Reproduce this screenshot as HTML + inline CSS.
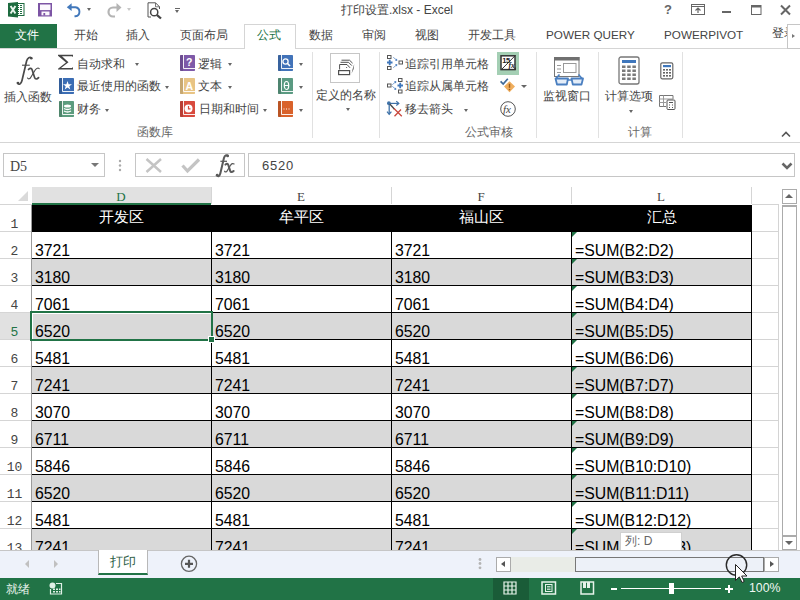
<!DOCTYPE html>
<html><head><meta charset="utf-8">
<style>
*{box-sizing:border-box;margin:0;padding:0}
html,body{width:800px;height:600px;overflow:hidden;background:#fff;font-family:"Liberation Sans",sans-serif;color:#444}
.a{position:absolute;white-space:nowrap}
svg.a{overflow:visible}
.tab{position:absolute;top:27px;font-size:12px;line-height:16px;color:#444;white-space:nowrap}
.rb{position:absolute;font-size:12px;line-height:14px;color:#444;white-space:nowrap}
.gl{position:absolute;top:125px;font-size:12px;line-height:14px;color:#666;white-space:nowrap}
.dd{position:absolute;width:0;height:0;border-left:2.5px solid transparent;border-right:2.5px solid transparent;border-top:3px solid #666}
.sep{position:absolute;top:52px;width:1px;height:86px;background:#e1e1e1}
.cell{position:absolute;font-size:15.8px;line-height:16px;color:#000;white-space:nowrap}
.hd{position:absolute;top:208px;width:179px;text-align:center;font-size:14.5px;line-height:18px;color:#fff}
.rh{position:absolute;left:0;width:31px;height:26px;padding-top:13px;padding-right:2px;text-align:center;font-family:"Liberation Mono",monospace;font-size:13px;line-height:13px;color:#555;letter-spacing:0px}
.ch{position:absolute;top:190px;width:40px;text-align:center;font-family:"Liberation Serif",serif;font-size:13px;line-height:14px;color:#444}
</style></head><body>

<!-- ===== title bar ===== -->
<svg class="a" style="left:8px;top:2px" width="17" height="16">
 <rect x="9.5" y="1.5" width="6.5" height="12" fill="#fff" stroke="#1d6b3f" stroke-width="1"/>
 <path d="M10 3.5h1M10 5.5h1M10 7.5h1M10 9.5h1M10 11.5h1 M12 3.5h2M12 5.5h2M12 7.5h2M12 9.5h2M12 11.5h2" stroke="#1d6b3f" stroke-width="1"/>
 <path d="M0 1 L10 0 L10 15.5 L0 14.5 Z" fill="#1d6b3f"/>
 <path d="M2.6 4 L7.4 11.5 M7.4 4 L2.6 11.5" stroke="#eaf6ee" stroke-width="1.9"/>
</svg>
<svg class="a" style="left:38px;top:3px" width="14" height="14">
 <path d="M0 0 H14 V13.5 H0 Z" fill="#7c54a4"/>
 <rect x="2" y="1.5" width="10.5" height="5.6" fill="#fbf8fd"/>
 <rect x="3.5" y="8.5" width="8" height="3.8" fill="#fbf8fd"/>
 <rect x="5.4" y="10" width="1.8" height="2.5" fill="#7c54a4"/>
</svg>
<svg class="a" style="left:66px;top:2px" width="16" height="15">
 <path d="M3.5 5.2 H9.5 A4.6 4.6 0 0 1 9.5 14.3 H8.5" fill="none" stroke="#4278bb" stroke-width="1.9"/>
 <path d="M0.8 5.2 L5.6 1.3 L5.6 9.1 Z" fill="#4278bb"/>
</svg>
<div class="dd" style="left:87px;top:8px;border-top-color:#666"></div>
<svg class="a" style="left:106px;top:2px" width="16" height="15">
 <path d="M12 5.5 H7 A4.5 4.5 0 0 0 7 14.5 H9" fill="none" stroke="#b4b4b4" stroke-width="2.2"/>
 <path d="M15.5 5.5 L10.5 1 L10.5 10 Z" fill="#b4b4b4"/>
</svg>
<div class="dd" style="left:127px;top:8px;border-top-color:#c8c8c8"></div>
<svg class="a" style="left:147px;top:2px" width="17" height="17">
 <path d="M1 15 V0.8 H8.5 L12.5 4.8 V7" fill="none" stroke="#555" stroke-width="1"/>
 <path d="M8.5 0.8 V4.8 H12.5" fill="none" stroke="#555" stroke-width="0.8"/>
 <path d="M1 15 H4" stroke="#555" stroke-width="1"/>
 <circle cx="7.2" cy="10.2" r="3.6" fill="#fff" stroke="#444" stroke-width="1.5"/>
 <path d="M9.8 12.8 L14 16.5" stroke="#444" stroke-width="2.2"/>
</svg>
<div class="a" style="left:175px;top:8px;width:5px;height:1px;background:#666"></div>
<div class="dd" style="left:175px;top:10px;border-top-color:#666"></div>
<div class="a" style="left:341px;top:2px;font-size:12px;line-height:16px;color:#444">打印设置.xlsx - Excel</div>
<div class="a" style="left:664px;top:3px;font-size:13px;font-weight:bold;line-height:14px;color:#666">?</div>
<svg class="a" style="left:691px;top:4px" width="14" height="12">
 <rect x="0.5" y="0.5" width="13" height="10" fill="none" stroke="#666"/>
 <path d="M0.5 2.5 H13.5" stroke="#666"/>
 <path d="M7 4 V9 M4.5 6.5 L7 4 L9.5 6.5" fill="none" stroke="#666" stroke-width="1.2"/>
</svg>
<div class="a" style="left:722px;top:11px;width:9px;height:2px;background:#666"></div>
<svg class="a" style="left:751px;top:5px" width="11" height="10">
 <rect x="0.5" y="0.5" width="9.5" height="9" fill="none" stroke="#666"/>
 <rect x="0.5" y="0.5" width="9.5" height="2" fill="#666"/>
</svg>
<svg class="a" style="left:780px;top:5px" width="11" height="10">
 <path d="M1 0.5 L10 9.5 M10 0.5 L1 9.5" stroke="#666" stroke-width="2"/>
</svg>

<!-- ===== tabs ===== -->
<div class="a" style="left:0;top:24px;width:57px;height:24px;background:#217346"></div>
<div class="tab" style="left:15px;color:#fff">文件</div>
<div class="tab" style="left:74px">开始</div>
<div class="tab" style="left:126px">插入</div>
<div class="tab" style="left:180px">页面布局</div>
<div class="a" style="left:0;top:48px;width:800px;height:1px;background:#d5d5d5"></div>
<div class="a" style="left:244px;top:24px;width:52px;height:25px;border:1px solid #d5d5d5;border-bottom:none;background:#fff"></div>
<div class="tab" style="left:257px;color:#217346">公式</div>
<div class="tab" style="left:309px">数据</div>
<div class="tab" style="left:362px">审阅</div>
<div class="tab" style="left:415px">视图</div>
<div class="tab" style="left:468px">开发工具</div>
<div class="tab" style="left:546px;font-size:11.7px">POWER QUERY</div>
<div class="tab" style="left:664px;font-size:11.7px">POWERPIVOT</div>
<div class="tab" style="left:772px;top:25px">登录</div>
<div class="a" style="left:787px;top:24px;width:14px;height:25px;background:#fff;border:1px solid #c6c6c6"></div>
<div class="a" style="left:792px;top:34px;width:0;height:0;border-top:2.5px solid transparent;border-bottom:2.5px solid transparent;border-left:3px solid #777"></div>

<!-- ===== ribbon ===== -->
<svg class="a" style="left:10px;top:52px" width="40" height="36">
 <path d="M7.5 31 C9 33.2, 11 32.5, 12 28.5 L16.6 9 C17.6 5.5, 20 4.6, 21.5 6" fill="none" stroke="#4a4a4a" stroke-width="1.7" stroke-linecap="round"/>
 <circle cx="8" cy="31" r="1.3" fill="#4a4a4a"/><circle cx="21.3" cy="6.3" r="1.3" fill="#4a4a4a"/>
 <path d="M12 13.2 H19.8" stroke="#4a4a4a" stroke-width="1.1"/>
 <path d="M18.5 17.5 C20 16, 21.5 16, 22.2 18 L24.6 25.5 C25.2 27.5, 27 27.5, 28.6 25.6" fill="none" stroke="#4a4a4a" stroke-width="1.7" stroke-linecap="round"/>
 <path d="M29.2 16.6 C28.2 15.6, 26.6 16, 25.2 18 L21 25 C20 27, 18.5 27.5, 17.5 26" fill="none" stroke="#4a4a4a" stroke-width="1.1" stroke-linecap="round"/>
</svg>
<div class="rb" style="left:4px;top:90px">插入函数</div>

<svg class="a" style="left:57px;top:54px" width="17" height="16"><path d="M1 0.8 H16 V3 L15 2.3 H5 L11.5 8.3 L4 14 H15 L16 13 V15.5 H1 V14.8 L9 8.5 L1 1.8 Z" fill="#444"/></svg>
<div class="rb" style="left:77px;top:57px">自动求和</div>
<div class="dd" style="left:135px;top:63px"></div>

<svg class="a" style="left:59px;top:78px" width="15" height="16">
 <rect x="0" y="0" width="15" height="16" rx="0.8" fill="#3b6db4"/>
 <rect x="0" y="0" width="3" height="16" fill="#000" opacity="0.14"/>
 <path d="M3.5 0 V13.5 H15" fill="none" stroke="#fff" stroke-width="1" opacity="0.9"/>
 <path d="M8.5 3 L9.6 6.2 L13 6.2 L10.3 8.2 L11.3 11.5 L8.5 9.5 L5.7 11.5 L6.7 8.2 L4 6.2 L7.4 6.2 Z" fill="#fff"/>
</svg>
<div class="rb" style="left:77px;top:79px">最近使用的函数</div>
<div class="dd" style="left:165px;top:86px"></div>

<svg class="a" style="left:59px;top:101px" width="15" height="16">
 <rect x="0" y="0" width="15" height="16" rx="0.8" fill="#5c9c7e"/>
 <rect x="0" y="0" width="3" height="16" fill="#000" opacity="0.14"/>
 <path d="M3.5 0 V13.5 H15" fill="none" stroke="#fff" stroke-width="1" opacity="0.9"/>
 <ellipse cx="8.5" cy="5" rx="3.5" ry="1.5" fill="#fff"/>
 <path d="M5 7.5 Q8.5 9.5 12 7.5 M5 10 Q8.5 12 12 10" fill="none" stroke="#fff" stroke-width="1.4"/>
</svg>
<div class="rb" style="left:77px;top:102px">财务</div>
<div class="dd" style="left:105px;top:109px"></div>

<svg class="a" style="left:180px;top:55px" width="15" height="16">
 <rect x="0" y="0" width="15" height="16" rx="0.8" fill="#7e59a8"/>
 <rect x="0" y="0" width="3" height="16" fill="#000" opacity="0.14"/>
 <path d="M3.5 0 V13.5 H15" fill="none" stroke="#fff" stroke-width="1" opacity="0.9"/>
 <text x="9.3" y="11" font-family="Liberation Sans" font-weight="bold" font-size="10.5" fill="#fff" text-anchor="middle">?</text>
</svg>
<div class="rb" style="left:198px;top:57px">逻辑</div>
<div class="dd" style="left:228px;top:63px"></div>

<svg class="a" style="left:180px;top:78px" width="15" height="16">
 <rect x="0" y="0" width="15" height="16" rx="0.8" fill="#e8c485"/>
 <rect x="0" y="0" width="3" height="16" fill="#000" opacity="0.14"/>
 <path d="M3.5 0 V13.5 H15" fill="none" stroke="#fff" stroke-width="1" opacity="0.9"/>
 <text x="9.3" y="11.5" font-family="Liberation Sans" font-weight="bold" font-size="10.5" fill="#fff" text-anchor="middle">A</text>
</svg>
<div class="rb" style="left:198px;top:79px">文本</div>
<div class="dd" style="left:228px;top:86px"></div>

<svg class="a" style="left:180px;top:101px" width="15" height="16">
 <rect x="0" y="0" width="15" height="16" rx="0.8" fill="#d84a3e"/>
 <rect x="0" y="0" width="3" height="16" fill="#000" opacity="0.14"/>
 <path d="M3.5 0 V13.5 H15" fill="none" stroke="#fff" stroke-width="1" opacity="0.9"/>
 <circle cx="8.5" cy="7.5" r="4" fill="#fff"/>
 <path d="M8.5 5 V7.8 H10.5" fill="none" stroke="#d84a3e" stroke-width="1.2"/>
</svg>
<div class="rb" style="left:199px;top:102px">日期和时间</div>
<div class="dd" style="left:263px;top:109px"></div>

<svg class="a" style="left:278px;top:55px" width="15" height="16">
 <rect x="0" y="0" width="15" height="16" rx="0.8" fill="#4273b9"/>
 <rect x="0" y="0" width="3" height="16" fill="#000" opacity="0.14"/>
 <path d="M3.5 0 V13.5 H15" fill="none" stroke="#fff" stroke-width="1" opacity="0.9"/>
 <circle cx="7.5" cy="6.5" r="2.6" fill="none" stroke="#fff" stroke-width="1.3"/>
 <path d="M9.3 8.3 L12 11" stroke="#fff" stroke-width="1.6"/>
</svg>
<div class="dd" style="left:299px;top:63px"></div>
<svg class="a" style="left:278px;top:78px" width="15" height="16">
 <rect x="0" y="0" width="15" height="16" rx="0.8" fill="#5a9a82"/>
 <rect x="0" y="0" width="3" height="16" fill="#000" opacity="0.14"/>
 <path d="M3.5 0 V13.5 H15" fill="none" stroke="#fff" stroke-width="1" opacity="0.9"/>
 <ellipse cx="8.5" cy="7.5" rx="2.2" ry="4" fill="none" stroke="#fff" stroke-width="1.2"/>
 <path d="M6.3 7.5 H10.7" stroke="#fff" stroke-width="1"/>
</svg>
<div class="dd" style="left:299px;top:86px"></div>
<svg class="a" style="left:278px;top:101px" width="15" height="16">
 <rect x="0" y="0" width="15" height="16" rx="0.8" fill="#d9622b"/>
 <rect x="0" y="0" width="3" height="16" fill="#000" opacity="0.14"/>
 <path d="M3.5 0 V13.5 H15" fill="none" stroke="#fff" stroke-width="1" opacity="0.9"/>
 <path d="M5.5 8h1M8 8h1M10.5 8h1" stroke="#fff" stroke-width="1"/>
</svg>
<div class="dd" style="left:299px;top:109px"></div>
<div class="gl" style="left:137px">函数库</div>
<div class="sep" style="left:312px"></div>

<!-- defined names -->
<div class="a" style="left:330px;top:53px;width:30px;height:30px;border:1px solid #c6c6c6;background:#fff"></div>
<svg class="a" style="left:326px;top:50px" width="40" height="36">
 <rect x="12.6" y="20.6" width="11" height="4" fill="#fff" stroke="#505050" stroke-width="1.2"/>
 <path d="M13.6 19.5 V14.5 H21 L24 17.8" fill="none" stroke="#505050" stroke-width="1"/>
 <path d="M14.5 12.3 H22.5 L25.8 15.6" fill="none" stroke="#505050" stroke-width="1"/>
 <path d="M15.5 10.2 H23.5 L26.6 13.2" fill="none" stroke="#505050" stroke-width="1"/>
 <circle cx="20.6" cy="17.5" r="0.6" fill="#505050"/>
 <path d="M28.3 14 Q28.3 19, 25.6 23.5 Q26.6 18.5, 28.3 14 Z" fill="#505050"/>
</svg>
<div class="rb" style="left:316px;top:88px">定义的名称</div>
<div class="dd" style="left:346px;top:108px"></div>
<div class="sep" style="left:379px"></div>

<!-- formula auditing -->
<svg class="a" style="left:387px;top:55px" width="16" height="16">
 <rect x="0.5" y="0.5" width="3.5" height="3" fill="none" stroke="#555" stroke-width="1"/>
 <rect x="0.5" y="11.5" width="3.5" height="3" fill="none" stroke="#555" stroke-width="1"/>
 <rect x="12" y="6" width="3.5" height="3" fill="none" stroke="#555" stroke-width="1"/>
 <path d="M0 7.5 H5.5 M2.7 4.8 V10.2" stroke="#3f77bc" stroke-width="1.8"/>
 <path d="M6.5 2.5 L9.5 5 M6.5 12.5 L9.5 10" stroke="#3f77bc" stroke-width="1" stroke-dasharray="1.5 0.8"/><path d="M8 5.8 L10.3 5.8 L10 3.6 Z M8 9.2 L10.3 9.2 L10 11.4 Z" fill="#3f77bc"/>
</svg>
<div class="rb" style="left:405px;top:57px">追踪引用单元格</div>
<svg class="a" style="left:387px;top:78px" width="16" height="16">
 <rect x="0.5" y="6" width="3.5" height="3" fill="none" stroke="#555" stroke-width="1"/>
 <rect x="11.5" y="0.5" width="3.5" height="3" fill="none" stroke="#555" stroke-width="1"/>
 <rect x="11.5" y="12" width="3.5" height="3" fill="none" stroke="#555" stroke-width="1"/>
 <path d="M10.5 7.5 H16 M13.2 4.8 V10.2" stroke="#3f77bc" stroke-width="1.8"/>
 <path d="M5.5 8.5 L8.5 11 M5.5 6.5 L8.5 4" stroke="#3f77bc" stroke-width="1" stroke-dasharray="1.5 0.8"/><path d="M7 11.8 L9.3 11.8 L9 9.6 Z M7 3.2 L9.3 3.2 L9 5.4 Z" fill="#3f77bc"/>
</svg>
<div class="rb" style="left:405px;top:79px">追踪从属单元格</div>
<svg class="a" style="left:387px;top:101px" width="17" height="17">
 <path d="M2.2 2 V13.2" stroke="#3f72a8" stroke-width="1.3"/>
 <path d="M0 10.6 L2.2 13.2 L4.4 10.6" fill="none" stroke="#3f72a8" stroke-width="1.2"/>
 <path d="M2 2.4 H11.5" stroke="#3f72a8" stroke-width="1.2"/>
 <path d="M9.3 0.3 L11.8 2.4 L9.3 4.5" fill="none" stroke="#3f72a8" stroke-width="1.2"/>
 <circle cx="1.9" cy="2.2" r="1.9" fill="#3f72a8"/>
 <path d="M2.8 3 L7.5 8.2" stroke="#4a4a4a" stroke-width="1.4"/>
 <path d="M7 7.5 L14.8 15.2 M7.5 15.2 L14 8.5" stroke="#c9483e" stroke-width="1.3"/>
</svg>
<div class="rb" style="left:405px;top:102px">移去箭头</div>
<div class="dd" style="left:464px;top:109px"></div>

<div class="a" style="left:497px;top:52px;width:22px;height:23px;background:#a4cfb4"></div>
<svg class="a" style="left:500px;top:55px" width="17" height="17">
 <rect x="1" y="0.8" width="14" height="13.8" fill="#fff" stroke="#333" stroke-width="1.5"/>
 <path d="M15.5 0.3 L1.8 14.2" stroke="#333" stroke-width="1"/>
 <text x="2.3" y="8" font-family="Liberation Sans" font-size="7.5" font-weight="bold" fill="#222" letter-spacing="-0.5">15</text>
 <text x="8.6" y="13" font-family="Liberation Serif" font-style="italic" font-size="7.5" font-weight="bold" fill="#222">fx</text>
 <path d="M13 15 L16 15 L16 12 Z" fill="#333"/>
</svg>
<svg class="a" style="left:499px;top:78px" width="18" height="16">
 <path d="M10.5 3.2 L16 8.6 L10.5 14.2 L5 8.6 Z" fill="#efae5e"/>
 <path d="M10.5 5.8 V9.8" stroke="#9a5a1a" stroke-width="1.4"/>
 <circle cx="10.5" cy="11.6" r="0.8" fill="#9a5a1a"/>
 <path d="M1.6 3.3 L4.2 6 L8.8 0.8" fill="none" stroke="#3f6a9a" stroke-width="1.7"/>
</svg>
<div class="dd" style="left:521px;top:85px;border-left-width:3px;border-right-width:3px;border-top-width:3.5px"></div>
<svg class="a" style="left:500px;top:101px" width="17" height="17">
 <circle cx="8" cy="8" r="7.3" fill="#fff" stroke="#555" stroke-width="1"/>
 <text x="3" y="12" font-family="Liberation Serif" font-style="italic" font-size="11" fill="#444">fx</text>
</svg>
<div class="gl" style="left:465px">公式审核</div>
<div class="sep" style="left:536px"></div>

<!-- watch window -->
<svg class="a" style="left:553px;top:56px" width="32" height="30">
 <rect x="1.5" y="1.5" width="24.5" height="19" fill="#fff" stroke="#777" stroke-width="1"/>
 <rect x="1" y="1" width="25.5" height="3.5" fill="#707070"/>
 <path d="M4 9.5 H8 M4 13 H8 M4 16.5 H8" stroke="#999" stroke-width="1"/>
 <rect x="10.5" y="7.5" width="12.5" height="9" fill="none" stroke="#999" stroke-width="1"/>
 <path d="M3 22.5 L6.5 18.5 M29 22.5 L25.5 18.5" stroke="#4a7fc0" stroke-width="1.6"/>
 <path d="M2.5 22.5 H15 L13.8 28.5 H4 Z" fill="#e4edf8" stroke="#4a7fc0" stroke-width="1.8" stroke-linejoin="round"/>
 <path d="M18.5 22.5 H30 L28.5 28.5 H19.8 Z" fill="#e4edf8" stroke="#4a7fc0" stroke-width="1.8" stroke-linejoin="round"/>
 <path d="M15 24 H18.5" stroke="#4a7fc0" stroke-width="1.5"/>
</svg>
<div class="rb" style="left:543px;top:89px">监视窗口</div>
<div class="sep" style="left:598px"></div>

<!-- calculation -->
<svg class="a" style="left:618px;top:56px" width="22" height="29">
 <rect x="1" y="1" width="20" height="27" rx="2" fill="#fff" stroke="#777" stroke-width="1.3"/>
 <rect x="4" y="4" width="14" height="3" fill="#3f77bc"/>
 <g fill="#7a7a7a">
  <rect x="4" y="9.5" width="3.5" height="2.5"/><rect x="9.2" y="9.5" width="3.5" height="2.5"/><rect x="14.4" y="9.5" width="3.5" height="2.5"/>
  <rect x="4" y="13.5" width="3.5" height="2.5"/><rect x="9.2" y="13.5" width="3.5" height="2.5"/><rect x="14.4" y="13.5" width="3.5" height="2.5"/>
  <rect x="4" y="17.5" width="3.5" height="2.5"/><rect x="9.2" y="17.5" width="3.5" height="2.5"/><rect x="14.4" y="17.5" width="3.5" height="2.5"/>
  <rect x="4" y="21.5" width="3.5" height="2.5"/><rect x="9.2" y="21.5" width="3.5" height="2.5"/><rect x="14.4" y="21.5" width="3.5" height="2.5"/>
 </g>
</svg>
<div class="rb" style="left:605px;top:89px">计算选项</div>
<div class="dd" style="left:629px;top:110px"></div>
<svg class="a" style="left:660px;top:62px" width="14" height="18">
 <rect x="0.8" y="0.8" width="12" height="16" rx="1.5" fill="#fff" stroke="#666" stroke-width="1.2"/>
 <rect x="3" y="3" width="8" height="2.2" fill="#3f77bc"/>
 <g fill="#666">
  <rect x="3" y="7" width="2" height="1.6"/><rect x="6" y="7" width="2" height="1.6"/><rect x="9" y="7" width="2" height="1.6"/>
  <rect x="3" y="10" width="2" height="1.6"/><rect x="6" y="10" width="2" height="1.6"/><rect x="9" y="10" width="2" height="1.6"/>
  <rect x="3" y="13" width="2" height="1.6"/><rect x="6" y="13" width="2" height="1.6"/><rect x="9" y="13" width="2" height="1.6"/>
 </g>
</svg>
<svg class="a" style="left:659px;top:95px" width="17" height="15">
 <path d="M0.5 0.5 H14 V4 M0.5 0.5 V11.5 H7" fill="none" stroke="#777" stroke-width="1"/>
 <path d="M0.5 4 H14 M0.5 7.5 H7 M4.5 0.5 V11.5" stroke="#999" stroke-width="1"/>
 <rect x="8" y="5" width="8" height="9.5" rx="1" fill="#fff" stroke="#555" stroke-width="1"/>
 <path d="M10 7.5 H14" stroke="#555" stroke-width="1"/>
 <path d="M10 10h1M13 10h1M10 12.5h1M13 12.5h1" stroke="#555" stroke-width="1.2"/>
</svg>
<div class="gl" style="left:628px">计算</div>
<div class="sep" style="left:682px"></div>
<svg class="a" style="left:781px;top:131px" width="10" height="7">
 <path d="M1 5.5 L5 1.5 L9 5.5" fill="none" stroke="#555" stroke-width="1.6"/>
</svg>
<div class="a" style="left:0;top:142px;width:800px;height:1px;background:#d5d5d5"></div>

<!-- ===== formula bar ===== -->
<div class="a" style="left:3px;top:153px;width:102px;height:24px;border:1px solid #c6c6c6;background:#fff"></div>
<div class="a" style="left:10px;top:160px;font-family:'Liberation Serif',serif;font-size:14px;line-height:14px;color:#444;letter-spacing:0px">D5</div>
<div class="dd" style="left:91px;top:163px;border-left-width:4px;border-right-width:4px;border-top-width:4px;border-top-color:#777"></div>
<svg class="a" style="left:118px;top:159px" width="4" height="13"><circle cx="2" cy="2" r="1.2" fill="#aaa"/><circle cx="2" cy="6.5" r="1.2" fill="#aaa"/><circle cx="2" cy="11" r="1.2" fill="#aaa"/></svg>
<div class="a" style="left:135px;top:153px;width:110px;height:24px;border:1px solid #c6c6c6;background:#fff"></div>
<svg class="a" style="left:145px;top:158px" width="18" height="15"><path d="M1.5 1 L16 14 M16 1 L1.5 14" stroke="#c4c4c4" stroke-width="2.5"/></svg>
<svg class="a" style="left:181px;top:158px" width="19" height="15"><path d="M1.5 7.5 L6.5 13 L18 1.5" fill="none" stroke="#c4c4c4" stroke-width="3.2"/></svg>
<svg class="a" style="left:211px;top:151px" width="32" height="28">
 <g transform="scale(0.78)">
 <path d="M7.5 31 C9 33.2, 11 32.5, 12 28.5 L16.6 9 C17.6 5.5, 20 4.6, 21.5 6" fill="none" stroke="#5a5a5a" stroke-width="2.6" stroke-linecap="round"/>
 <circle cx="8" cy="31" r="1.8" fill="#5a5a5a"/><circle cx="21.3" cy="6.3" r="1.8" fill="#5a5a5a"/>
 <path d="M12 13.2 H20.5" stroke="#5a5a5a" stroke-width="1.6"/>
 <path d="M18.5 17.5 C20 16, 21.5 16, 22.2 18 L24.6 25.5 C25.2 27.5, 27 27.5, 29 25.6" fill="none" stroke="#5a5a5a" stroke-width="2.6" stroke-linecap="round"/>
 <path d="M29.6 16.6 C28.2 15.6, 26.6 16, 25.2 18 L21 25 C20 27, 18.5 27.5, 17.5 26" fill="none" stroke="#5a5a5a" stroke-width="1.6" stroke-linecap="round"/>
 </g>
</svg>
<div class="a" style="left:248px;top:153px;width:547px;height:24px;border:1px solid #c6c6c6;background:#fff"></div>
<div class="a" style="left:262px;top:158px;font-size:13px;line-height:15px;color:#444;letter-spacing:0.8px">6520</div>
<svg class="a" style="left:781px;top:162px" width="12" height="9"><path d="M1.5 1.5 L6 6 L10.5 1.5" fill="none" stroke="#666" stroke-width="2.6"/></svg>

<div class="a" style="left:0;top:187px;width:778px;height:18px;background:#fff"></div>
<div class="a" style="left:32px;top:187px;width:179px;height:16px;background:#e1e1e1"></div>
<div class="a" style="left:32px;top:203px;width:179px;height:2px;background:#217346"></div>
<div class="a" style="left:211px;top:187px;width:1px;height:17px;background:#d5d5d5"></div>
<div class="a" style="left:391px;top:187px;width:1px;height:17px;background:#d5d5d5"></div>
<div class="a" style="left:571px;top:187px;width:1px;height:17px;background:#d5d5d5"></div>
<div class="a" style="left:751px;top:187px;width:1px;height:17px;background:#d5d5d5"></div>
<div class="a" style="left:0;top:204px;width:32px;height:1px;background:#d5d5d5"></div>
<div class="a" style="left:31px;top:205px;width:1px;height:345px;background:#9b9b9b"></div>
<svg class="a" style="left:18px;top:191px" width="11" height="11"><path d="M10 0 L10 10 L0 10 Z" fill="#dadada"/></svg>
<div class="ch" style="left:101px;color:#217346">D</div>
<div class="ch" style="left:281px;color:#444">E</div>
<div class="ch" style="left:461px;color:#444">F</div>
<div class="ch" style="left:641px;color:#444">L</div>
<div class="a" style="left:32px;top:205px;width:719px;height:27px;background:#000"></div>
<div class="a" style="left:32px;top:231px;width:720px;height:1px;background:#000"></div>
<div class="a" style="left:752px;top:231px;width:26px;height:1px;background:#d4d4d4"></div>
<div class="a" style="left:0;top:231px;width:31px;height:1px;background:#d5d5d5"></div>
<div class="rh" style="top:205px;background:transparent;color:#444">1</div>
<div class="a" style="left:32px;top:232px;width:719px;height:27px;background:#fff"></div>
<div class="a" style="left:32px;top:258px;width:720px;height:1px;background:#000"></div>
<div class="a" style="left:752px;top:258px;width:26px;height:1px;background:#d4d4d4"></div>
<div class="a" style="left:0;top:258px;width:31px;height:1px;background:#d5d5d5"></div>
<div class="rh" style="top:232px;background:transparent;color:#444">2</div>
<div class="a" style="left:32px;top:259px;width:719px;height:27px;background:#d9d9d9"></div>
<div class="a" style="left:32px;top:285px;width:720px;height:1px;background:#000"></div>
<div class="a" style="left:752px;top:285px;width:26px;height:1px;background:#d4d4d4"></div>
<div class="a" style="left:0;top:285px;width:31px;height:1px;background:#d5d5d5"></div>
<div class="rh" style="top:259px;background:transparent;color:#444">3</div>
<div class="a" style="left:32px;top:286px;width:719px;height:27px;background:#fff"></div>
<div class="a" style="left:32px;top:312px;width:720px;height:1px;background:#000"></div>
<div class="a" style="left:752px;top:312px;width:26px;height:1px;background:#d4d4d4"></div>
<div class="a" style="left:0;top:312px;width:31px;height:1px;background:#d5d5d5"></div>
<div class="rh" style="top:286px;background:transparent;color:#444">4</div>
<div class="a" style="left:32px;top:313px;width:719px;height:27px;background:#d9d9d9"></div>
<div class="a" style="left:32px;top:339px;width:720px;height:1px;background:#000"></div>
<div class="a" style="left:752px;top:339px;width:26px;height:1px;background:#d4d4d4"></div>
<div class="a" style="left:0;top:339px;width:31px;height:1px;background:#d5d5d5"></div>
<div class="rh" style="top:313px;background:#e1e1e1;color:#217346">5</div>
<div class="a" style="left:32px;top:340px;width:719px;height:27px;background:#fff"></div>
<div class="a" style="left:32px;top:366px;width:720px;height:1px;background:#000"></div>
<div class="a" style="left:752px;top:366px;width:26px;height:1px;background:#d4d4d4"></div>
<div class="a" style="left:0;top:366px;width:31px;height:1px;background:#d5d5d5"></div>
<div class="rh" style="top:340px;background:transparent;color:#444">6</div>
<div class="a" style="left:32px;top:367px;width:719px;height:27px;background:#d9d9d9"></div>
<div class="a" style="left:32px;top:393px;width:720px;height:1px;background:#000"></div>
<div class="a" style="left:752px;top:393px;width:26px;height:1px;background:#d4d4d4"></div>
<div class="a" style="left:0;top:393px;width:31px;height:1px;background:#d5d5d5"></div>
<div class="rh" style="top:367px;background:transparent;color:#444">7</div>
<div class="a" style="left:32px;top:394px;width:719px;height:27px;background:#fff"></div>
<div class="a" style="left:32px;top:420px;width:720px;height:1px;background:#000"></div>
<div class="a" style="left:752px;top:420px;width:26px;height:1px;background:#d4d4d4"></div>
<div class="a" style="left:0;top:420px;width:31px;height:1px;background:#d5d5d5"></div>
<div class="rh" style="top:394px;background:transparent;color:#444">8</div>
<div class="a" style="left:32px;top:421px;width:719px;height:27px;background:#d9d9d9"></div>
<div class="a" style="left:32px;top:447px;width:720px;height:1px;background:#000"></div>
<div class="a" style="left:752px;top:447px;width:26px;height:1px;background:#d4d4d4"></div>
<div class="a" style="left:0;top:447px;width:31px;height:1px;background:#d5d5d5"></div>
<div class="rh" style="top:421px;background:transparent;color:#444">9</div>
<div class="a" style="left:32px;top:448px;width:719px;height:27px;background:#fff"></div>
<div class="a" style="left:32px;top:474px;width:720px;height:1px;background:#000"></div>
<div class="a" style="left:752px;top:474px;width:26px;height:1px;background:#d4d4d4"></div>
<div class="a" style="left:0;top:474px;width:31px;height:1px;background:#d5d5d5"></div>
<div class="rh" style="top:448px;background:transparent;color:#444">10</div>
<div class="a" style="left:32px;top:475px;width:719px;height:27px;background:#d9d9d9"></div>
<div class="a" style="left:32px;top:501px;width:720px;height:1px;background:#000"></div>
<div class="a" style="left:752px;top:501px;width:26px;height:1px;background:#d4d4d4"></div>
<div class="a" style="left:0;top:501px;width:31px;height:1px;background:#d5d5d5"></div>
<div class="rh" style="top:475px;background:transparent;color:#444">11</div>
<div class="a" style="left:32px;top:502px;width:719px;height:27px;background:#fff"></div>
<div class="a" style="left:32px;top:528px;width:720px;height:1px;background:#000"></div>
<div class="a" style="left:752px;top:528px;width:26px;height:1px;background:#d4d4d4"></div>
<div class="a" style="left:0;top:528px;width:31px;height:1px;background:#d5d5d5"></div>
<div class="rh" style="top:502px;background:transparent;color:#444">12</div>
<div class="a" style="left:32px;top:529px;width:719px;height:21px;background:#d9d9d9"></div>
<div class="rh" style="top:529px;background:transparent;color:#444">13</div>
<div class="a" style="left:211px;top:205px;width:1px;height:345px;background:#000"></div>
<div class="a" style="left:391px;top:205px;width:1px;height:345px;background:#000"></div>
<div class="a" style="left:571px;top:205px;width:1px;height:345px;background:#000"></div>
<div class="a" style="left:751px;top:205px;width:1px;height:345px;background:#000"></div>
<div class="a" style="left:778px;top:204px;width:1px;height:346px;background:#d4d4d4"></div>
<div class="a" style="left:752px;top:204px;width:26px;height:1px;background:#d4d4d4"></div>
<div class="hd" style="left:32px">开发区</div>
<div class="hd" style="left:212px">牟平区</div>
<div class="hd" style="left:392px">福山区</div>
<div class="hd" style="left:572px">汇总</div>
<div class="cell" style="left:35px;top:243px">3721</div>
<div class="cell" style="left:215px;top:243px">3721</div>
<div class="cell" style="left:395px;top:243px">3721</div>
<div class="cell" style="left:575px;top:243px">=SUM(B2:D2)</div>
<svg class="a" style="left:572px;top:232px" width="5" height="5"><path d="M0 0 L5 0 L0 5 Z" fill="#217346"/></svg>
<div class="cell" style="left:35px;top:270px">3180</div>
<div class="cell" style="left:215px;top:270px">3180</div>
<div class="cell" style="left:395px;top:270px">3180</div>
<div class="cell" style="left:575px;top:270px">=SUM(B3:D3)</div>
<svg class="a" style="left:572px;top:259px" width="5" height="5"><path d="M0 0 L5 0 L0 5 Z" fill="#217346"/></svg>
<div class="cell" style="left:35px;top:297px">7061</div>
<div class="cell" style="left:215px;top:297px">7061</div>
<div class="cell" style="left:395px;top:297px">7061</div>
<div class="cell" style="left:575px;top:297px">=SUM(B4:D4)</div>
<svg class="a" style="left:572px;top:286px" width="5" height="5"><path d="M0 0 L5 0 L0 5 Z" fill="#217346"/></svg>
<div class="cell" style="left:35px;top:324px">6520</div>
<div class="cell" style="left:215px;top:324px">6520</div>
<div class="cell" style="left:395px;top:324px">6520</div>
<div class="cell" style="left:575px;top:324px">=SUM(B5:D5)</div>
<svg class="a" style="left:572px;top:313px" width="5" height="5"><path d="M0 0 L5 0 L0 5 Z" fill="#217346"/></svg>
<div class="cell" style="left:35px;top:351px">5481</div>
<div class="cell" style="left:215px;top:351px">5481</div>
<div class="cell" style="left:395px;top:351px">5481</div>
<div class="cell" style="left:575px;top:351px">=SUM(B6:D6)</div>
<svg class="a" style="left:572px;top:340px" width="5" height="5"><path d="M0 0 L5 0 L0 5 Z" fill="#217346"/></svg>
<div class="cell" style="left:35px;top:378px">7241</div>
<div class="cell" style="left:215px;top:378px">7241</div>
<div class="cell" style="left:395px;top:378px">7241</div>
<div class="cell" style="left:575px;top:378px">=SUM(B7:D7)</div>
<svg class="a" style="left:572px;top:367px" width="5" height="5"><path d="M0 0 L5 0 L0 5 Z" fill="#217346"/></svg>
<div class="cell" style="left:35px;top:405px">3070</div>
<div class="cell" style="left:215px;top:405px">3070</div>
<div class="cell" style="left:395px;top:405px">3070</div>
<div class="cell" style="left:575px;top:405px">=SUM(B8:D8)</div>
<svg class="a" style="left:572px;top:394px" width="5" height="5"><path d="M0 0 L5 0 L0 5 Z" fill="#217346"/></svg>
<div class="cell" style="left:35px;top:432px">6711</div>
<div class="cell" style="left:215px;top:432px">6711</div>
<div class="cell" style="left:395px;top:432px">6711</div>
<div class="cell" style="left:575px;top:432px">=SUM(B9:D9)</div>
<svg class="a" style="left:572px;top:421px" width="5" height="5"><path d="M0 0 L5 0 L0 5 Z" fill="#217346"/></svg>
<div class="cell" style="left:35px;top:459px">5846</div>
<div class="cell" style="left:215px;top:459px">5846</div>
<div class="cell" style="left:395px;top:459px">5846</div>
<div class="cell" style="left:575px;top:459px">=SUM(B10:D10)</div>
<svg class="a" style="left:572px;top:448px" width="5" height="5"><path d="M0 0 L5 0 L0 5 Z" fill="#217346"/></svg>
<div class="cell" style="left:35px;top:486px">6520</div>
<div class="cell" style="left:215px;top:486px">6520</div>
<div class="cell" style="left:395px;top:486px">6520</div>
<div class="cell" style="left:575px;top:486px">=SUM(B11:D11)</div>
<svg class="a" style="left:572px;top:475px" width="5" height="5"><path d="M0 0 L5 0 L0 5 Z" fill="#217346"/></svg>
<div class="cell" style="left:35px;top:513px">5481</div>
<div class="cell" style="left:215px;top:513px">5481</div>
<div class="cell" style="left:395px;top:513px">5481</div>
<div class="cell" style="left:575px;top:513px">=SUM(B12:D12)</div>
<svg class="a" style="left:572px;top:502px" width="5" height="5"><path d="M0 0 L5 0 L0 5 Z" fill="#217346"/></svg>
<div class="cell" style="left:35px;top:540px">7241</div>
<div class="cell" style="left:215px;top:540px">7241</div>
<div class="cell" style="left:395px;top:540px">7241</div>
<div class="cell" style="left:575px;top:540px">=SUM(B13:D13)</div>
<svg class="a" style="left:572px;top:529px" width="5" height="5"><path d="M0 0 L5 0 L0 5 Z" fill="#217346"/></svg>
<div class="a" style="left:30px;top:311px;width:183px;height:30px;border:2px solid #217346"></div>
<div class="a" style="left:32px;top:313px;width:179px;height:26px;border:1px solid #fff;border-right:none;border-bottom:none"></div>
<div class="a" style="left:208px;top:336px;width:7px;height:7px;background:#217346;border:1px solid #fff"></div>
<!-- ===== vertical scrollbar ===== -->
<div class="a" style="left:779px;top:187px;width:21px;height:363px;background:#fff"></div>
<div class="a" style="left:782px;top:189px;width:15px;height:15px;border:1px solid #ababab;background:#fff"></div>
<div class="a" style="left:785px;top:194px;width:0;height:0;border-left:4.5px solid transparent;border-right:4.5px solid transparent;border-bottom:4.5px solid #666"></div>
<div class="a" style="left:782px;top:205px;width:15px;height:331px;border:1px solid #ababab;border-top-width:2px;background:#fff"></div>
<div class="a" style="left:782px;top:536px;width:15px;height:14px;border:1px solid #ababab;background:#fff"></div>
<div class="a" style="left:785px;top:541px;width:0;height:0;border-left:4.5px solid transparent;border-right:4.5px solid transparent;border-top:4.5px solid #666"></div>

<!-- tooltip -->
<div class="a" style="left:620px;top:532px;width:62px;height:20px;background:#fff;border:1px solid #d0d0d0"></div>
<div class="a" style="left:625px;top:534px;font-size:12px;line-height:14px;color:#666">列: D</div>

<!-- ===== sheet tab bar ===== -->
<div class="a" style="left:0;top:550px;width:800px;height:28px;background:#eef2fa"></div>
<div class="a" style="left:0;top:550px;width:800px;height:1px;background:#c6c6c6"></div>
<div class="a" style="left:25px;top:560px;width:0;height:0;border-top:4px solid transparent;border-bottom:4px solid transparent;border-right:4px solid #c0c0c0"></div>
<div class="a" style="left:54px;top:560px;width:0;height:0;border-top:4px solid transparent;border-bottom:4px solid transparent;border-left:4px solid #c0c0c0"></div>
<div class="a" style="left:98px;top:550px;width:50px;height:25px;background:#fff;border:1px solid #b8b8b8;border-top:none;border-bottom:2px solid #217346"></div>
<div class="a" style="left:110px;top:554px;font-size:12.5px;line-height:16px;color:#2d6046">打印</div>
<svg class="a" style="left:180px;top:555px" width="18" height="18">
 <circle cx="9" cy="8.8" r="7.6" fill="none" stroke="#666" stroke-width="1.3"/>
 <path d="M9 4.8 V12.8 M5 8.8 H13" stroke="#555" stroke-width="2.2"/>
</svg>
<svg class="a" style="left:478px;top:557px" width="4" height="14"><circle cx="2" cy="2.5" r="1.4" fill="#b4b4b4"/><circle cx="2" cy="6.5" r="1.4" fill="#b4b4b4"/><circle cx="2" cy="10.8" r="1.4" fill="#b4b4b4"/></svg>
<div class="a" style="left:496px;top:557px;width:15px;height:15px;border:1px solid #ababab;background:#fff"></div>
<div class="a" style="left:501px;top:561px;width:0;height:0;border-top:3.5px solid transparent;border-bottom:3.5px solid transparent;border-right:4px solid #555"></div>
<div class="a" style="left:511px;top:557px;width:65px;height:15px;background:#e9ece7"></div>
<div class="a" style="left:575px;top:557px;width:189px;height:15px;border:1px solid #777;background:#edf1f8"></div>
<div class="a" style="left:764px;top:557px;width:15px;height:15px;border:1px solid #ababab;background:#fff"></div>
<div class="a" style="left:770px;top:561px;width:0;height:0;border-top:3.5px solid transparent;border-bottom:3.5px solid transparent;border-left:4px solid #555"></div>
<!-- ===== status bar ===== -->
<div class="a" style="left:0;top:578px;width:800px;height:22px;background:#217346"></div>
<div class="a" style="left:6px;top:581px;font-size:12px;line-height:16px;color:#e8f4ec">就绪</div>
<svg class="a" style="left:49px;top:582px" width="14" height="13">
 <circle cx="3.5" cy="3.5" r="3" fill="#e0f0e6"/>
 <path d="M7 1.5 H12.5 V12 H1.5 V7" fill="none" stroke="#e0f0e6" stroke-width="1.2"/>
 <g fill="#e0f0e6"><rect x="4" y="6.5" width="2" height="1.5"/><rect x="7" y="6.5" width="2" height="1.5"/><rect x="10" y="6.5" width="1.5" height="1.5"/>
 <rect x="4" y="9" width="2" height="1.5"/><rect x="7" y="9" width="2" height="1.5"/><rect x="10" y="9" width="1.5" height="1.5"/></g>
</svg>
<div class="a" style="left:493px;top:578px;width:36px;height:22px;background:#1a5c38"></div>
<svg class="a" style="left:503px;top:581px" width="15" height="14">
 <path d="M1 0.5 V13.5 M5 0.5 V13.5 M9 0.5 V13.5 M13 0.5 V13.5 M0.5 1 H13.5 M0.5 5 H13.5 M0.5 9 H13.5 M0.5 13 H13.5" stroke="#e6f3ea" stroke-width="1.2"/>
</svg>
<svg class="a" style="left:541px;top:581px" width="16" height="14">
 <rect x="1" y="1" width="13.5" height="12" fill="none" stroke="#e6f3ea" stroke-width="1.5"/>
 <rect x="4.5" y="3.5" width="6.5" height="7" fill="none" stroke="#e6f3ea" stroke-width="1"/>
 <path d="M6 5.5 H9.5 M6 7 H9.5 M6 8.5 H9.5" stroke="#e6f3ea" stroke-width="0.8"/>
</svg>
<svg class="a" style="left:580px;top:581px" width="15" height="14">
 <rect x="1" y="1" width="12.5" height="12" fill="none" stroke="#e6f3ea" stroke-width="1.5"/>
 <rect x="3" y="1" width="3" height="6" fill="#e6f3ea"/><rect x="7" y="1" width="3" height="6" fill="#e6f3ea"/>
</svg>
<div class="a" style="left:611px;top:588px;width:6px;height:2px;background:#fff"></div>
<div class="a" style="left:621px;top:588px;width:100px;height:1px;background:#fff"></div>
<div class="a" style="left:669px;top:583px;width:5px;height:11px;background:#fff"></div>
<div class="a" style="left:725px;top:588px;width:8px;height:2px;background:#fff"></div>
<div class="a" style="left:728px;top:585px;width:2px;height:8px;background:#fff"></div>
<div class="a" style="left:749px;top:581px;font-size:12.3px;line-height:15px;color:#f0f8f2">100%</div>
<!-- cursor -->
<svg class="a" style="left:720px;top:550px" width="32" height="34">
 <circle cx="16.5" cy="15" r="10.2" fill="none" stroke="#2a2a2a" stroke-width="1.4"/>
 <path d="M15.5 14.5 V30.5 L19.3 26.9 L22 32.5 L24.2 31.5 L21.7 26 L27 26 Z" fill="#fff" stroke="#222" stroke-width="1" stroke-linejoin="round"/>
</svg>


</body></html>
